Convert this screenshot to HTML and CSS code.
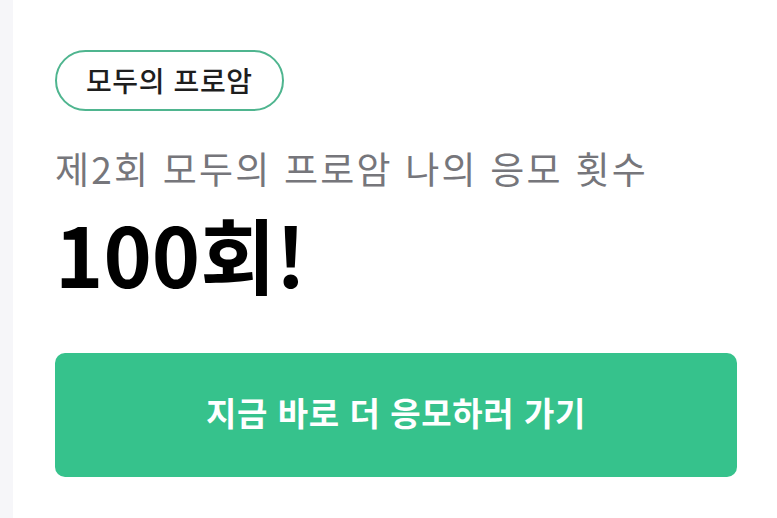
FILE: index.html
```html
<!DOCTYPE html>
<html lang="ko">
  <head>
    <meta charset="UTF-8" />
    <meta name="viewport" content="width=device-width, initial-scale=1.0" />
    <title>모두의 프로암 응모 횟수</title>
    <link rel="stylesheet" href="styles.css">
  </head>
  <body>
    <div class="side-strip"></div>
    <main class="card">
      <span class="tag">모두의 프로암</span>
      <p class="subtitle">제2회 모두의 프로암 나의 응모 횟수</p>
      <h1 class="count">100회!</h1>
      <button class="apply-button">지금 바로 더 응모하러 가기</button>
    </main>
  </body>
</html>
```

FILE: styles.css
```css
body {
  display: flex;
  margin: 0;
  height: 100vh;
  background: #fff;
  font-family: "Noto Sans CJK KR", "Noto Sans", sans-serif;
}

/* Light strip on the left edge */
.side-strip {
  width: 13px;
  background-color: #f6f6f9;
}

.card {
  flex: 1;
  display: flex;
  flex-direction: column;
  align-items: flex-start;
  padding: 50px 40px 0 42px;
}

.tag {
  display: inline-flex;
  align-items: center;
  box-sizing: content-box;
  height: 55px;
  padding: 0 29px 2px;
  border: 2px solid #4fb58f;
  border-radius: 31px;
  font-size: 28px;
  letter-spacing: 0.6px;
  font-weight: 500;
  color: #1e1e1e;
}

.subtitle {
  margin: 32px 0 0;
  font-size: 37px;
  letter-spacing: 2.2px;
  line-height: 50px;
  color: #76767b;
}

.count {
  margin: 10px 0 0;
  font-size: 82px;
  line-height: 100px;
  font-weight: 700;
  color: #000;
}

.apply-button {
  align-self: stretch;
  height: 124px;
  margin-top: 50px;
  padding: 0 0 6px;
  border: none;
  border-radius: 10px;
  background-color: #36c28c;
  color: #fff;
  font-family: inherit;
  font-size: 33px;
  letter-spacing: 0.6px;
  font-weight: 700;
}
```
